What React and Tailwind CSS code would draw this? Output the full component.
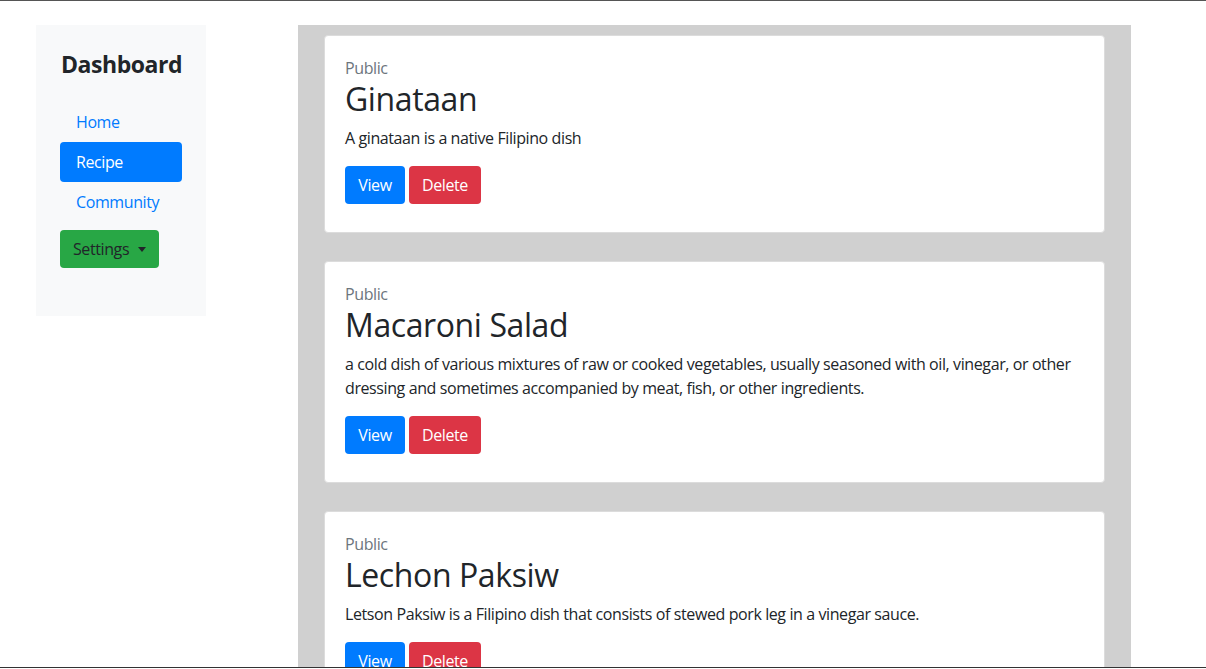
import React from 'react';

const recipes = [
  {
    title: 'Ginataan',
    desc: 'A ginataan is a native Filipino dish',
  },
  {
    title: 'Macaroni Salad',
    desc: 'a cold dish of various mixtures of raw or cooked vegetables, usually seasoned with oil, vinegar, or other dressing and sometimes accompanied by meat, fish, or other ingredients.',
  },
  {
    title: 'Lechon Paksiw',
    desc: 'Letson Paksiw is a Filipino dish that consists of stewed pork leg in a vinegar sauce.',
  },
];

const Sidebar = () => (
  <aside className="w-[170px] h-[291px] shrink-0 bg-[#f8f9fa] pl-6 pt-[25px]">
    <h3 className="text-[23px] leading-[29px] font-bold tracking-[-0.02em] text-[#212529] pl-px">Dashboard</h3>
    <nav className="mt-[23px] flex flex-col w-[122px]">
      <a className="px-4 py-2 leading-6 text-[#007bff]">Home</a>
      <a className="px-4 py-2 leading-6 text-white bg-[#007bff] rounded">Recipe</a>
      <a className="px-4 py-2 leading-6 text-[#007bff]">Community</a>
    </nav>
    <button className="mt-2 h-[38px] w-[99px] pl-[13px] rounded bg-[#28a745] text-[#212529] flex items-center">
      Settings
      <span className="ml-[9px] w-0 h-0 border-l-[4px] border-r-[4px] border-t-[5px] border-l-transparent border-r-transparent border-t-[#212529]" />
    </button>
  </aside>
);

const RecipeCard = ({ title, desc }) => (
  <div className="bg-white border border-[#dcdcdc] rounded px-5 pt-5 pb-7">
    <p className="leading-6 text-[#6c757d]">Public</p>
    <h2 className="text-[32px] leading-[38px] font-medium text-[#212529] mb-2">{title}</h2>
    <p className="leading-6 text-[#212529] mb-4">{desc}</p>
    <div className="flex gap-1">
      <button className="h-[38px] w-[60px] rounded bg-[#007bff] text-white">View</button>
      <button className="h-[38px] w-[72px] rounded bg-[#dc3545] text-white">Delete</button>
    </div>
  </div>
);

export default function App() {
  return (
    <div
      className="h-[669px] w-[1206px] overflow-hidden bg-white flex flex-col tracking-[-0.025em]"
      style={{ fontFamily: '"Open Sans", "Noto Sans", sans-serif' }}
    >
      <div className="h-px bg-[#555]" />
      <div className="flex-1 flex overflow-hidden pt-6 pl-9">
        <Sidebar />
        <main className="ml-[92px] w-[833px] bg-[#d0d0d0] px-[26px] pt-[10px] flex flex-col gap-[28px]">
          {recipes.map(r => (
            <RecipeCard key={r.title} {...r} />
          ))}
        </main>
      </div>
      <div className="h-px bg-[#333]" />
      <div className="h-px bg-white" />
    </div>
  );
}
